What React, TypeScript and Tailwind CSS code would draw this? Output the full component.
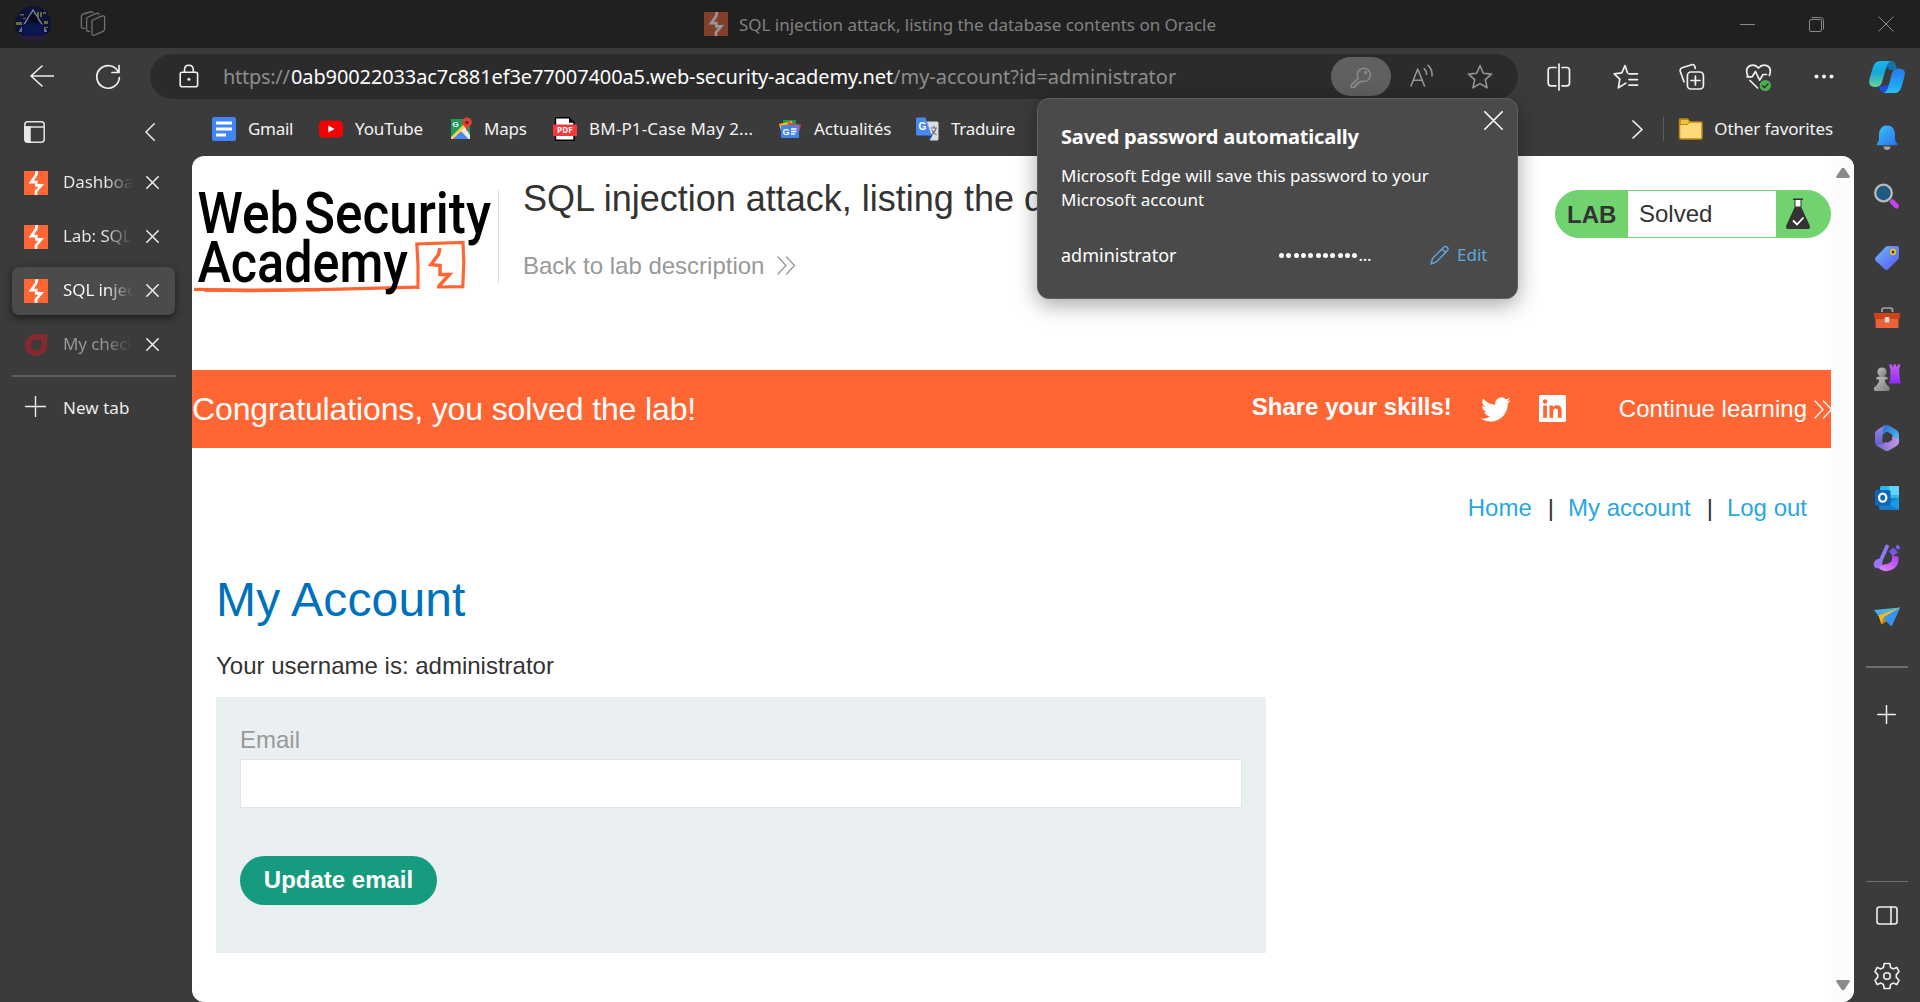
import React from "react";

const UI = "font-['Noto_Sans','Open_Sans',sans-serif]";

type IconProps = {
  w: number;
  h: number;
  className?: string;
  sw?: number;
  children: React.ReactNode;
};

/* Outline icon whose viewBox equals its pixel size. */
function Line({ w, h, className = "", sw = 1.5, children }: IconProps) {
  return (
    <svg
      width={w}
      height={h}
      viewBox={`0 0 ${w} ${h}`}
      fill="none"
      stroke="currentColor"
      strokeWidth={sw}
      strokeLinecap="round"
      strokeLinejoin="round"
      className={`shrink-0 ${className}`}
    >
      {children}
    </svg>
  );
}

function BurpIcon({ dim = false, className = "" }: { dim?: boolean; className?: string }) {
  return (
    <svg width="24" height="24" viewBox="0 0 24 24" className={`shrink-0 ${className}`}>
      <rect width="24" height="24" fill={dim ? "#82402b" : "#ff6633"} />
      <path
        d="M12.900 0L12.200 4L7.200 11.200H12.300V14.300H17.200L12 20.500V24"
        fill="none"
        stroke={dim ? "#979797" : "#fff"}
        strokeWidth="2.700"
      />
    </svg>
  );
}

function Avatar() {
  return (
    <svg width="36" height="36" viewBox="0 0 36 36" className="shrink-0">
      <defs>
        <clipPath id="av"><circle cx="18" cy="18" r="18" /></clipPath>
      </defs>
      <g clipPath="url(#av)">
        <rect width="36" height="36" fill="#0c1336" />
        <rect y="28" width="36" height="8" fill="#2b1d33" />
        <g fill="#8a8440" opacity=".75">
          <rect x="5" y="8" width="4" height="1.5" />
          <rect x="1" y="16" width="6" height="3" />
          <rect x="29" y="15" width="4" height="3" />
          <rect x="22" y="6" width="2" height="5" />
          <rect x="25" y="6" width="2" height="5" />
          <rect x="28" y="6" width="3" height="2" />
          <rect x="8" y="12" width="3" height="1" />
          <rect x="30" y="21" width="3" height="1" />
        </g>
        <path d="M18 4L5 25H31Z" fill="#10142b" stroke="#7f8ba6" strokeWidth="1.4" />
        <path d="M13 19q0-11 5-11t5 11z" fill="#070b1c" />
        <path d="M7 19q11-5 22 0v11H7z" fill="#091342" />
        <path d="M9 19h18v11H9z" fill="#0b1850" />
      </g>
    </svg>
  );
}

function CloseX({ s = 13, sw = 1.7 }: { s?: number; sw?: number }) {
  return (
    <Line w={s} h={s} sw={sw}>
      <path d={`M.8 .8L${s - 0.8} ${s - 0.8}M${s - 0.8} .8L.8 ${s - 0.8}`} />
    </Line>
  );
}

function TitleBar() {
  return (
    <div className="flex h-12 shrink-0 items-center bg-[#202020] pl-[15px] text-[#828282]">
      <Avatar />
      <Line w={26} h={26} className="ml-[29px] text-[#707070]" sw={1.3}>
        <path d="M12 9.5L21.5 5.2Q24.6 4 24.6 6.5V18Q24.6 19.6 23 20.4L14.5 24.2Q12 25 12 22.5V11Q12 9.8 12 9.5Z" />
        <path d="M9.5 20.3Q6.6 21 6.6 18.5V8.2Q6.6 6.6 8 6L16.5 2.3Q18.6 1.6 19 3.5" />
        <path d="M4.6 17.3Q1.4 18 1.4 15.5V5.2Q1.4 3.8 3 3L10.5 1Q12.5 .6 13 1.6" />
      </Line>
      <div className="ml-[598px] flex w-[900px] items-center">
        <BurpIcon dim />
        <span className={`ml-[11px] mt-[2px] whitespace-nowrap text-[17px] tracking-[-0.02px] ${UI}`}>
          SQL injection attack, listing the database contents on Oracle
        </span>
      </div>
      <div className="ml-auto flex items-center gap-[54px] pr-[26px] text-[#8a8a8a]">
        <Line w={15} h={15} sw={1}><path d="M0 7.5H15" /></Line>
        <Line w={15} h={15} sw={1}>
          <rect x=".5" y="2.5" width="12" height="12" rx="1.5" />
          <path d="M3 .5H11.5Q14.5 .5 14.5 3.5V12" />
        </Line>
        <CloseX s={16} sw={1} />
      </div>
    </div>
  );
}

function Toolbar() {
  return (
    <div className="flex h-[57px] shrink-0 items-start pt-[6px] text-[#f0f0f0]">
      <div className="flex h-[45px] w-[150px] shrink-0 items-center pl-[30px]">
        <Line w={24} h={22} className="mt-[-2px]" sw={1.6}><path d="M12 1L1 11L12 21M1 11H23.5" /></Line>
        <Line w={26} h={26} className="ml-[41px]" sw={1.7}>
          <path d="M23.4 8.2A11.3 11.3 0 1 0 24.4 13.5M24 1.5V8.5H17" />
        </Line>
      </div>
      <div className="flex h-[45px] w-[1368px] shrink-0 items-center rounded-full bg-[#2b2b2b] pl-[29px]">
        <Line w={20} h={24} className="mt-[-2px]" sw={1.6}>
          <rect x="1.2" y="8.2" width="17.4" height="14.6" rx="2" />
          <path d="M5.5 8V6Q5.5 1.2 9.9 1.2T14.3 6V8" />
          <circle cx="9.9" cy="15.3" r="1.5" fill="currentColor" stroke="none" strokeWidth="2" />
        </Line>
        <div className={`ml-[24px] flex w-[1108px] whitespace-nowrap text-[20px] text-[#8d8d8d] ${UI}`}>
          <span className="w-[68px] tracking-[-0.3px]">https://</span>
          <span className="w-[602px] tracking-[-0.12px] text-white">
            0ab90022033ac7c881ef3e77007400a5.web-security-academy.net
          </span>
          <span>/my-account?id=administrator</span>
        </div>
        <div className="flex h-[39px] w-[60px] items-center justify-center rounded-full bg-[#606060] text-[#8c8c8c]">
          <Line w={22} h={22}>
            <path d="M8.2 12.4L1.3 18.9V21.2H5.2V18.8H7.6V16.4H9.8L11.2 15A6.6 6.6 0 1 0 8.2 12.4Z" />
            <circle cx="15.6" cy="6.4" r="1" />
          </Line>
        </div>
        <Line w={24} h={24} className="ml-[19px] mt-[-2px] text-[#959595]" sw={1.6}>
          <path d="M1 22L7.7 5L14.5 22M3.2 16.2H12.2" />
          <path d="M14.2 4.6Q16.5 6.8 16.6 10.3M18 1.4Q22.5 5.2 22 12" />
        </Line>
        <Line w={26} h={26} className="ml-[33px] text-[#959595]" sw={1.6}>
          <path d="M13 1.6L16.3 9.3L24.5 10.1L18.3 15.6L20.1 23.8L13 19.6L5.9 23.8L7.7 15.6L1.5 10.1L9.7 9.3Z" />
        </Line>
      </div>
      <div className="flex h-[45px] flex-1 items-center">
        <Line w={24} h={28} className="ml-[29px]" sw={1.7}>
          <path d="M9 4.5H4Q1.2 4.5 1.2 7.3V20Q1.2 22.8 4 22.8H9M15 4.5H19.7Q22.5 4.5 22.5 7.3V20Q22.5 22.8 19.7 22.8H15M12 1V27" />
        </Line>
        <Line w={26} h={26} className="ml-[42px]" sw={1.7}>
          <path d="M14.5 9L12 1.6L8.8 8.8L1.2 9.8L6.8 15.2L5.4 23.8L12 19.6L12.8 19.2M16 9.8H24.5M16 15.6H24.5M16 21.2H24.5" />
        </Line>
        <Line w={26} h={28} className="ml-[40px]" sw={1.7}>
          <rect x="8.4" y="9" width="16" height="17" rx="3.5" />
          <path d="M16.4 13V22M12 17.5H21M5 18.8L1.3 8.5Q.6 5.8 3 4.7L13.5 1.5Q15.6 1.2 16.3 5.3" />
        </Line>
        <Line w={28} h={29} className="ml-[40px] mt-[2px]" sw={1.7}>
          <path d="M2.6 12.4Q-.2 5 5.3 2.6Q10 .8 13.5 5Q17 .8 21.7 2.6Q27.2 5 24.4 12.4M2 13.8H7.2L10.5 8.5L14.6 17.2L18 11.5H21.5M5 17.5L12.6 25" />
          <circle cx="20.3" cy="22.5" r="5.6" fill="#4caf50" stroke="none" strokeWidth="1" />
          <path d="M17.6 22.8L19.5 24.6L23 20.9" stroke="#222" strokeWidth="1.3" />
        </Line>
        <svg width="20" height="5" viewBox="0 0 20 5" className="ml-[41px]" fill="#f0f0f0">
          <circle cx="2.5" cy="2.5" r="2" /><circle cx="10" cy="2.5" r="2" /><circle cx="17.5" cy="2.5" r="2" />
        </svg>
        <svg width="38" height="38" viewBox="0 0 38 38" className="ml-[34px] shrink-0">
          <defs>
            <linearGradient id="cpA" x1="0" y1="0" x2="0" y2="1">
              <stop offset="0" stopColor="#18b6ee" /><stop offset=".45" stopColor="#17a8d8" /><stop offset="1" stopColor="#69d39c" />
            </linearGradient>
            <linearGradient id="cpB" x1="0" y1="0" x2="0" y2="1">
              <stop offset="0" stopColor="#2a78ea" /><stop offset=".7" stopColor="#21a5f5" /><stop offset="1" stopColor="#27c3ee" />
            </linearGradient>
          </defs>
          <path d="M18 3H24Q27 3 28 8L29 12H22L18 9Z" fill="#1272a8" />
          <path d="M11 28.5Q11 33 14.5 34.5H24L21 27Z" fill="#1d4fd8" />
          <path d="M12 3H23Q19.500 4 18 10L14 24Q13 29 7 29Q0 29 1.200 22L5 9Q7 3 12 3Z" fill="url(#cpA)" />
          <path d="M27 35H15.500Q19 34 20.500 28L24 15Q25.300 10.500 31 10.500Q38 10.500 36.800 17L33.500 29Q31.500 35 27 35Z" fill="url(#cpB)" />
        </svg>
      </div>
    </div>
  );
}

function Tab({ label, kind = "normal" }: { label: string; kind?: "normal" | "active" | "muted" }) {
  const box =
    kind === "active"
      ? "bg-[#4b4b4b] shadow-[0_3px_8px_rgba(0,0,0,0.55)]"
      : "";
  const color =
    kind === "active"
      ? "from-[#ffffff] from-60% to-[#4b4b4b]"
      : kind === "muted"
        ? "from-[#989898] from-60% to-[#3b3b3b]"
        : "from-[#ececec] from-60% to-[#3b3b3b]";
  return (
    <div className={`ml-[12px] flex h-12 w-[163px] items-center rounded-[7px] pl-3 ${box}`}>
      {kind === "muted" ? (
        <svg width="24" height="24" viewBox="0 0 24 24" className="shrink-0">
          <path d="M12 3.800H20.200V12A8.200 8.200 0 1 1 12 3.800Z" fill="none" stroke="#862a31" strokeWidth="5.800" />
        </svg>
      ) : (
        <BurpIcon />
      )}
      <span
        className={`-mt-[2px] ml-[15px] w-[70px] overflow-hidden whitespace-nowrap bg-gradient-to-r bg-clip-text text-[17px] tracking-[-0.1px] text-transparent ${color} ${UI}`}
      >
        {label}
      </span>
      <span className="-mt-[2px] ml-[13px] text-[#f0f0f0]"><CloseX sw={1.5} /></span>
    </div>
  );
}

function TabsColumn() {
  return (
    <div className="flex w-48 shrink-0 flex-col text-[#ececec]">
      <div className="flex h-[54px] items-center pl-6">
        <svg width="21" height="22" viewBox="0 0 21 22" fill="none" stroke="#e6e6e6" strokeWidth="1.5">
          <rect x=".8" y=".8" width="19.400" height="20.400" rx="3" />
          <path d="M1 6H20" /><path d="M1 6H6V21H3Q1 20 1 18Z" fill="#e6e6e6" />
        </svg>
        <Line w={10} h={18} className="ml-[100px]"><path d="M9.200 .8L1 9L9.200 17.200" /></Line>
      </div>
      <div className="flex flex-col gap-[6px]">
        <Tab label="Dashboard" />
        <Tab label="Lab: SQL injection" />
        <Tab label="SQL injection" kind="active" />
        <Tab label="My checklist" kind="muted" />
      </div>
      <div className="ml-3 mt-[6px] h-[2px] w-[164px] bg-[#5e5e5e]" />
      <div className="flex h-[58px] items-center pl-[25px]">
        <Line w={21} h={21} sw={1.400}><path d="M10.500 .5V20.500M.5 10.500H20.500" /></Line>
        <span className={`ml-[17px] mt-[4px] text-[17px] tracking-[0.05px] ${UI}`}>New tab</span>
      </div>
    </div>
  );
}

function Bookmark({ icon, label, w }: { icon: React.ReactNode; label: string; w: string }) {
  return (
    <div className={`flex shrink-0 items-center ${w}`}>
      <span className="flex w-9 shrink-0">{icon}</span>
      <span className={`whitespace-nowrap text-[17px] ${UI}`}>{label}</span>
    </div>
  );
}

function BookmarksBar() {
  return (
    <div className="flex h-[51px] shrink-0 items-center pl-5 pb-[3px] text-[#f3f3f3]">
      <Bookmark
        w="w-[107px] tracking-[-0.300px]"
        label="Gmail"
        icon={
          <svg width="24" height="24" viewBox="0 0 24 24">
            <rect width="24" height="24" rx="2" fill="#4285f4" />
            <path d="M4 6H20M4 12H20M4 18H14" stroke="#fff" strokeWidth="3" />
          </svg>
        }
      />
      <Bookmark
        w="w-[131px] tracking-[-0.100px]"
        label="YouTube"
        icon={
          <svg width="24" height="24" viewBox="0 0 24 24">
            <rect y="3.500" width="24" height="17" rx="4.500" fill="#f60000" />
            <path d="M9.300 8.500V15.500L15.600 12Z" fill="#fff" />
          </svg>
        }
      />
      <Bookmark
        w="w-[103px] tracking-[-0.200px] [&>span:first-child]:w-[34px]"
        label="Maps"
        icon={
          <svg width="24" height="24" viewBox="0 0 24 24">
            <path d="M1 2H20V22H1Z" fill="#1c9c58" />
            <path d="M1 22L11 12L20 22Z" fill="#4a87ee" />
            <path d="M1 20L17 4L20 8L3 22H1Z" fill="#ffd04b" />
            <path d="M3 22L11 14.500L18 22Z" fill="#4a87ee" />
            <path d="M11 14L15 10L20 18V22H18.500Z" fill="#e8e8e8" />
            <path d="M16.800 14Q16 10.500 13.500 8.500A4.800 4.800 0 1 1 20.500 8.500Q17.500 11 16.800 14Z" fill="#db4437" />
            <circle cx="17" cy="5.500" r="1.800" fill="#7c2218" />
            <text x="2.500" y="9.500" fontSize="8" fontWeight="700" fill="#fff" fontFamily="Liberation Sans, sans-serif">G</text>
          </svg>
        }
      />
      <Bookmark
        w="w-[225px] tracking-[0.150px]"
        label="BM-P1-Case May 2..."
        icon={
          <svg width="24" height="24" viewBox="0 0 24 24">
            <path d="M2.500 .7H16L21 5.700V23.300H2.500Z" fill="#fff" stroke="#000" strokeWidth="1.400" />
            <path d="M16 .7V5.700H21Z" fill="#000" />
            <rect y="7.500" width="24" height="11.500" rx="1" fill="#f4383c" />
            <text x="12" y="16.100" textAnchor="middle" fontSize="8" fontWeight="700" fill="#fff" fontFamily="Open Sans, sans-serif">PDF</text>
          </svg>
        }
      />
      <Bookmark
        w="w-[138px] tracking-[-0.050px] [&>span:first-child]:w-[36px]"
        label="Actualités"
        icon={
          <svg width="24" height="24" viewBox="0 0 24 24">
            <path d="M5 3H18V12H5Z" fill="#0f9d58" />
            <path d="M1 7L14 4L16 12L3 14Z" fill="#fbbc04" />
            <path d="M10 5L23 8L21 15L9 12Z" fill="#ea4335" />
            <rect x="3" y="8" width="18" height="13" rx="1" fill="#4285f4" />
            <text x="4.500" y="17.800" fontSize="9" fontWeight="700" fill="#fff" fontFamily="Liberation Sans, sans-serif">G</text>
            <path d="M13 12H18.500M13 14.500H18.500M13 17H17" stroke="#fff" strokeWidth="1.300" />
          </svg>
        }
      />
      <Bookmark
        w="w-[150px] tracking-[-0.300px] [&>span:first-child]:w-[35px]"
        label="Traduire"
        icon={
          <svg width="24" height="24" viewBox="0 0 24 24">
            <path d="M10 4.500H21Q22.500 4.500 22.500 6V22Q22.500 23.500 21 23.500H14Z" fill="#d9dde0" />
            <path d="M14.500 11H21M17.800 9V11M20 11Q19 15.500 15 18M16 13Q17.500 16.500 20.500 18" stroke="#6b7378" strokeWidth="1.200" fill="none" />
            <path d="M12 18H16.500L14 23Z" fill="#1d3fae" />
            <path d="M1.500 .5H9.500L15.500 18.500H1.500Q0 18.500 0 17V2Q0 .5 1.500 .5Z" fill="#4a87ee" />
            <text x="2.500" y="13" fontSize="10" fontWeight="700" fill="#fff" fontFamily="Liberation Sans, sans-serif">G</text>
          </svg>
        }
      />
      <div className="ml-auto flex items-center pr-[21px]">
        <Line w={11} h={19} sw={1.700}><path d="M1 1L10 9.500L1 18" /></Line>
        <div className="ml-[20px] h-6 w-px bg-[#5c5c5c]" />
        <svg width="25" height="24" viewBox="0 0 25 24" className="ml-[14px]">
          <path d="M1.500 3Q1.500 2 2.500 2H9.500L11.500 5H22.500Q24 5 24 6.500V20.500Q24 22 22.500 22H3Q1.500 22 1.500 20.500Z" fill="#ffd97a" stroke="#bb8b10" strokeWidth="1.500" />
          <path d="M2 7.500H9.500L11.500 4.500L10 2.500H2.500Z" fill="#f5c431" stroke="#bb8b10" strokeWidth="1" />
        </svg>
        <span className={`ml-[11px] whitespace-nowrap text-[17px] tracking-[-0.120px] ${UI}`}>Other favorites</span>
      </div>
    </div>
  );
}

function AcademyLogo() {
  return (
    <svg width="306" height="130" viewBox="192 170 306 130" className="mt-[14px] shrink-0">
      <g fill="none" stroke="#ff6633" strokeWidth="3">
        <path d="M194 289.300L250 290.200L330 289.300L417 287.200" strokeWidth="3.300" />
        <path d="M204 291L250 291.600L320 290.500" strokeWidth="1.500" />
        <path d="M418 289V265L416.800 244L463 242.500L463.800 262L462.800 286.600L437 287" strokeWidth="3.200" />
        <path d="M440 248L438.500 254.500L431 264.500L440 265.500V274.500H449.500L438.500 286.500" strokeWidth="3.500" />
      </g>
      <g fontFamily="Roboto, sans-serif" fontWeight="500" fontSize="57.500" fill="#000">
        <text x="197.500" y="233" textLength="101" lengthAdjust="spacingAndGlyphs">Web</text>
        <text x="304" y="233" textLength="187" lengthAdjust="spacingAndGlyphs">Security</text>
        <text x="197.500" y="281.500" textLength="210.500" lengthAdjust="spacingAndGlyphs">Academy</text>
      </g>
    </svg>
  );
}

function DoubleChevron({ className = "" }: { className?: string }) {
  return (
    <Line w={19} h={19} sw={1.300} className={className}>
      <path d="M1 1L9 9.500L1 18M9.500 1L17.500 9.500L9.500 18" />
    </Line>
  );
}

function LabHeader() {
  return (
    <div className="flex h-[214px] items-start">
      <AcademyLogo />
      <div className="mt-[34px] h-[93px] w-px shrink-0 bg-[#dcdcdc]" />
      <div className="ml-6 mt-[22px] w-[1032px] shrink-0 whitespace-nowrap">
        <h2 className="text-[36px] leading-[42px] text-[#333332]">
          SQL injection attack, listing the database contents on Oracle
        </h2>
        <div className="mt-[32px] flex items-center text-[24px] leading-[28px] text-[#999999]">
          Back to lab description
          <DoubleChevron className="mt-[-2px] ml-[13px]" />
        </div>
      </div>
      <div className="mt-[34px] flex h-12 w-[276px] shrink-0 overflow-hidden rounded-full border border-[#71d36f] bg-[#71d36f] text-[24px] text-[#333332]">
        <div className="flex w-[72px] items-center pl-[11px] pt-[2px] font-bold">LAB</div>
        <div className="flex w-[148px] items-center bg-white pl-[11px]">Solved</div>
        <svg width="26" height="32" viewBox="0 0 26 32" className="ml-[9px] mt-[7px]">
          <rect x="10" y="2" width="6" height="9" fill="#fff" />
          <path d="M8 1.200H18" stroke="#333332" strokeWidth="1.600" />
          <path d="M10 2V9M16 2V9" stroke="#333332" strokeWidth="1" />
          <path d="M10 8.500H16L24.700 27.500Q25.500 31 23 31H3Q.5 31 1.300 27.500Z" fill="#333332" />
          <path d="M8 22.500L12 26.500L18.500 19.500" stroke="#fff" strokeWidth="1.800" fill="none" />
        </svg>
      </div>
    </div>
  );
}

function Banner() {
  return (
    <div className="flex h-[78px] items-center overflow-hidden bg-[#ff6633] text-white">
      <span className="whitespace-nowrap text-[32px] tracking-[-0.130px]">Congratulations, you solved the lab!</span>
      <div className="-mr-[2px] ml-auto flex items-center whitespace-nowrap text-[24px]">
        <span className="mb-1 font-bold">Share your skills!</span>
        <svg width="30" height="30" viewBox="0 0 24 24" fill="#fff" className="ml-[29px]">
          <path d="M23.600 4.900a9.600 9.600 0 0 1-2.800.8 4.800 4.800 0 0 0 2.100-2.700 9.600 9.600 0 0 1-3.100 1.200 4.900 4.900 0 0 0-8.300 4.400A13.800 13.800 0 0 1 1.700 3.600a4.900 4.900 0 0 0 1.500 6.500 4.800 4.800 0 0 1-2.200-.6v.1a4.900 4.900 0 0 0 3.900 4.700 4.900 4.900 0 0 1-2.200.1 4.900 4.900 0 0 0 4.500 3.400A9.800 9.800 0 0 1 0 19.800a13.800 13.800 0 0 0 7.500 2.200c9 0 13.900-7.500 13.900-13.900v-.6a9.900 9.900 0 0 0 2.200-2.600z" />
        </svg>
        <svg width="27" height="27" viewBox="0 0 27 27" className="-mt-[2px] ml-[28px]">
          <rect width="27" height="27" rx="1.500" fill="#fff" />
          <g fill="#ff6633">
            <circle cx="6" cy="6.500" r="2.200" /><rect x="4.200" y="10.500" width="3.700" height="12.300" />
            <path d="M10.500 10.500H14V12.300Q15.300 10.200 18 10.200Q22.600 10.200 22.600 15.500V22.800H18.900V16.300Q18.900 13.500 16.700 13.500Q14.200 13.500 14.200 16.500V22.800H10.500Z" />
          </g>
        </svg>
        <span className="ml-[53px]">Continue learning</span>
        <DoubleChevron className="ml-[7px]" />
      </div>
    </div>
  );
}

function LabPage() {
  return (
    <div className="w-[1639px] shrink-0 font-['Liberation_Sans',Arial,sans-serif]">
      <LabHeader />
      <Banner />
      <nav className="flex h-[120px] items-center justify-end gap-[14px] pr-6 text-[24px] text-[#29a7df]">
        <span>Home</span>
        <span className="ml-[2px] text-[#333332]">|</span>
        <span>My account</span>
        <span className="ml-[2px] text-[#333332]">|</span>
        <span>Log out</span>
      </nav>
      <div className="pl-6">
        <h1 className="mt-[4px] text-[48px] leading-[56px] tracking-[0.150px] text-[#0071bd]">My Account</h1>
        <p className="mt-[24px] text-[24px] leading-[28px] text-[#333332]">Your username is: administrator</p>
        <div className="mt-[17px] h-[256px] w-[1050px] bg-[#eaeff2] px-6 pt-[29px]">
          <div className="text-[24px] leading-[28px] text-[#999999]">Email</div>
          <div className="mt-[5px] h-[49px] w-[1002px] border border-[#e4e4e4] bg-white" />
          <div className="mt-12 flex h-[49px] w-[197px] items-center justify-center rounded-full bg-[#169b7f] pb-[2px] text-[24px] font-bold text-white">
            Update email
          </div>
        </div>
      </div>
    </div>
  );
}

function SideIcon({ children, className = "" }: { children: React.ReactNode; className?: string }) {
  return (
    <svg width="28" height="28" viewBox="0 0 28 28" className={`shrink-0 ${className}`}>
      {children}
    </svg>
  );
}

function AppRail() {
  return (
    <div className="flex w-[66px] shrink-0 flex-col items-center text-[#efefef]">
      <svg width="0" height="0" className="absolute">
        <defs>
          <linearGradient id="gBell" x1="0" y1="0" x2="1" y2="1"><stop offset="0" stopColor="#38c8f5" /><stop offset="1" stopColor="#2b6df0" /></linearGradient>
          <linearGradient id="gTag" x1="0" y1="0" x2="1" y2="1"><stop offset="0" stopColor="#70b8fb" /><stop offset="1" stopColor="#5a55f5" /></linearGradient>
          <linearGradient id="gGray" x1="0" y1="0" x2="1" y2="1"><stop offset="0" stopColor="#c4c4c4" /><stop offset="1" stopColor="#7c7c7c" /></linearGradient>
          <linearGradient id="gPur" x1="0" y1="0" x2="0" y2="1"><stop offset="0" stopColor="#c65cf5" /><stop offset="1" stopColor="#8f2bf0" /></linearGradient>
          <linearGradient id="gM1" x1="0" y1="0" x2="0" y2="1"><stop offset="0" stopColor="#9d86dc" /><stop offset="1" stopColor="#5b5fd0" /></linearGradient>
          <linearGradient id="gM2" x1="0" y1="0" x2="1" y2="1"><stop offset="0" stopColor="#2f63c9" /><stop offset="1" stopColor="#49c8f5" /></linearGradient>
          <linearGradient id="gM3" x1="0" y1="0" x2="1" y2="0"><stop offset="0" stopColor="#7466cf" /><stop offset="1" stopColor="#c495e6" /></linearGradient>
          <linearGradient id="gDes" x1="0" y1="1" x2="1" y2="0"><stop offset="0" stopColor="#e58df5" /><stop offset="1" stopColor="#a43ff0" /></linearGradient>
          <linearGradient id="gPlane" x1="0" y1="0" x2="0" y2="1"><stop offset="0" stopColor="#50b8e8" /><stop offset="1" stopColor="#2d8df0" /></linearGradient>
        </defs>
      </svg>
      <div className="flex flex-col gap-8 pt-[19px]">
        <SideIcon>
          <path d="M4 20L6 16V10.500Q6.500 1.500 14 1.500T22 10.500V16L24.500 20Q25 21.300 23.500 21.300H4.500Q3 21.300 4 20Z" fill="url(#gBell)" />
          <path d="M10.500 22.500H17.500Q17 26 14 26T10.500 22.500Z" fill="#a8a8a8" />
        </SideIcon>
        <SideIcon className="-mt-px mb-px">
          <path d="M17.500 17.500L22 22" stroke="#9d9d9d" strokeWidth="3" />
          <path d="M19.500 19L23.500 23" stroke="#c940f2" strokeWidth="5" strokeLinecap="round" />
          <circle cx="10.500" cy="10" r="8.300" fill="#1d5a82" stroke="#b9b9b9" strokeWidth="2.300" />
        </SideIcon>
        <SideIcon>
          <path d="M14.500 2H24Q26 2 26 4V13Q26 14.500 25 15.500L15.500 25Q13.500 27 11.500 25L3 17Q1 15 3 13L12.500 3Q13.500 2 14.500 2Z" fill="url(#gTag)" />
          <circle cx="20" cy="8" r="2.300" fill="#3b3b3b" stroke="#f2c80f" strokeWidth="1.700" />
        </SideIcon>
        <SideIcon>
          <path d="M9 8V6Q9 4 11 4H17.500Q19.500 4 19.500 6V8" fill="none" stroke="#a5a5a5" strokeWidth="1.700" />
          <path d="M2.500 13H25.500V22.500Q25.500 24 24 24H4Q2.500 24 2.500 22.500Z" fill="#e8623a" />
          <path d="M1.500 9H26.500Q27.500 9 27.200 10L26.500 15H1.800L.8 10Q.8 9 1.500 9Z" fill="#cf4316" />
          <rect x="11.800" y="13" width="4.500" height="5.500" rx="1" fill="#d7d7d7" />
        </SideIcon>
        <SideIcon>
          <path d="M16 .5H19V2.500H20.500V.5H23V2.500H24.500V.5H27.500L26 6L27 17Q28 17.500 27.500 19.500H16Q15.500 18 17 17L17.500 6Z" fill="url(#gPur)" />
          <circle cx="9" cy="8" r="4.600" fill="url(#gGray)" />
          <path d="M3.500 13.200Q9 11.500 14.500 13.200V15.500H11.800Q12 20 16.500 23V25.500Q16.500 27 15 27H3Q1 27 1 25.500V23.500Q6 20 6.200 15.500H3.500Z" fill="url(#gGray)" />
        </SideIcon>
        <SideIcon>
          <path d="M12 1.300L5 5.300Q2 7.200 2 10.500V18.500L4.500 22L11 20.500L9.500 18V11.500Q9.500 9.500 11.500 8.500L16 6Z" fill="url(#gM1)" />
          <path d="M12 1.300Q14 .3 16 1.500L23.500 6Q26 7.500 26 10.500V17L19.500 14.500V12Q19.500 10.500 18 9.700L14.500 8Q11 8 9.500 11.500Q9 5 12 1.300Z" fill="url(#gM2)" />
          <path d="M26 15V18Q26 20.500 23.500 22L16 26.500Q14 27.500 12 26.500L4.500 22.300Q3 21.300 2.500 19.500Q5 21.500 9 20L17.500 15.800Q19.500 14.800 19.500 12.500Z" fill="url(#gM3)" />
          <path d="M14.500 8.700L19 11.200V16L14.500 18.700L10 16V11.200Z" fill="#3b3b3b" />
        </SideIcon>
        <SideIcon>
          <rect x="7" y="2" width="19" height="18" rx="1.500" fill="#2bb8ef" />
          <rect x="16" y="2" width="10" height="9" fill="#62d3fa" />
          <path d="M6 14H26V24Q26 26 24 26H8Q6 26 6 24Z" fill="#1b7cc8" />
          <path d="M26 13.500V26L15 20Z" fill="#1a9be2" />
          <rect x="2" y="6" width="15.500" height="15.500" rx="1.500" fill="#0c66bb" />
          <ellipse cx="9.700" cy="13.700" rx="3.600" ry="4" fill="none" stroke="#fff" strokeWidth="2.300" />
        </SideIcon>
        <SideIcon>
          <path d="M4 19.500Q12 22.500 18 18Q19.500 15 19 11.500L25.500 12.500Q26.500 21 20.500 25Q12 29.500 6 24.500Q3.500 22.500 4 19.500Z" fill="url(#gDes)" />
          <path d="M14 2.500L7.500 17" stroke="#8a7cf8" strokeWidth="3.800" strokeLinecap="round" />
          <ellipse cx="5" cy="19.500" rx="4" ry="5" transform="rotate(35 5 19.500)" fill="#9a74f2" />
          <path d="M20.500 3.500L25 8.500L19.500 12L16 7.500Z" fill="#7a55ec" /><path d="M24.500 .5L27.500 3.500L25 6L22.500 3Z" fill="#7b66f5" />
        </SideIcon>
        <SideIcon>
          <path d="M1 6L27 3.500L18.500 22.500L13 17L5.500 12Z" fill="url(#gPlane)" />
          <path d="M27 3.500L5.500 11.500L8.500 20.500L11 13Z" fill="#f6b81c" />
          <path d="M8.500 20.500L10 14L14 17Z" fill="#c8860c" />
          <path d="M27 3.500L10.500 14L18.500 22Z" fill="#3793f2" />
        </SideIcon>
      </div>
      <div className="mt-[34px] h-[2px] w-[42px] bg-[#6d6d6d]" />
      <Line w={19} h={19} className="mr-px mt-[37px]"><path d="M9.500 .7V18.300M.7 9.500H18.300" /></Line>
      <div className="mt-auto h-px w-[42px] bg-[#707070]" />
      <Line w={22} h={19} className="mt-[24px]" sw={1.600}>
        <rect x="1" y="1" width="20" height="17" rx="2.500" /><path d="M15 1V18" />
      </Line>
      <Line w={26} h={28} className="mb-[12px] mt-[37px]" sw={1.600}>
        <path d="M10.200 1.500H15.800L16.600 5.500L19 6.900L22.800 5.400L25 9.700L22.300 12.600V15.400L25 18.300L22.800 22.600L19 21.100L16.600 22.500L15.800 26.500H10.200L9.400 22.500L7 21.100L3.200 22.600L1 18.300L3.700 15.400V12.600L1 9.700L3.200 5.400L7 6.900L9.400 5.500Z" />
        <circle cx="13" cy="14" r="3.300" />
      </Line>
    </div>
  );
}

function PasswordPopup() {
  return (
    <div className={`absolute left-[1037px] top-[98px] h-[201px] w-[481px] rounded-[12px] border border-[#606060] bg-[#4a4a4a] pl-[23px] text-white shadow-[0_6px_22px_rgba(0,0,0,0.35)] ${UI}`}>
      <div className="absolute right-[14px] top-[12px]"><CloseX s={19} sw={1.600} /></div>
      <div className="mt-[24px] text-[20px] font-bold leading-[28px] tracking-[-0.180px]">Saved password automatically</div>
      <p className="mt-[13px] w-[400px] text-[17px] leading-[24px]">
        Microsoft Edge will save this password to your
        <br />
        Microsoft account
      </p>
      <div className="mt-[30px] flex items-center text-[17px] leading-[26px]">
        <span className="w-[218px] text-[18px]">administrator</span>
        <span className="flex w-[151px] items-center">
          <span className="flex gap-[2.350px]">
            {Array.from({ length: 11 }, (_, i) => (
              <span key={i} className="h-[5px] w-[5px] rounded-full bg-white" />
            ))}
          </span>
          <span className="ml-px tracking-[-0.300px]">...</span>
        </span>
        <Line w={19} h={20} className="text-[#5ea7df]" sw={1.400}>
          <path d="M1 19L2.500 13.500L14 2Q15.500 .7 17.300 2.300Q18.700 4 17.500 5.500L6 17.200ZM12 4L15.600 7.600" />
        </Line>
        <span className="ml-[8px] text-[#5ea7df]">Edit</span>
      </div>
    </div>
  );
}

export default function App() {
  return (
    <div className="relative flex h-[1002px] w-[1920px] flex-col overflow-hidden bg-[#3b3b3b]">
      <TitleBar />
      <Toolbar />
      <div className="flex min-h-0 flex-1">
        <TabsColumn />
        <div className="flex w-[1662px] shrink-0 flex-col">
          <BookmarksBar />
          <div className="flex min-h-0 flex-1 overflow-hidden rounded-[12px] bg-white">
            <LabPage />
            <div className="flex w-[23px] flex-col items-center justify-between bg-[#fcfcfc] pb-[11px] pt-[11px]">
              <svg width="14" height="12" viewBox="0 0 14 12" fill="#8a8a8a"><path d="M5.500 1.500Q7 0 8.500 1.500L13.500 9Q14.500 11 12.500 11H1.500Q-.5 11 .5 9Z" /></svg>
              <svg width="14" height="12" viewBox="0 0 14 12" fill="#8a8a8a"><path d="M5.500 10.500Q7 12 8.500 10.500L13.500 3Q14.500 1 12.500 1H1.500Q-.5 1 .5 3Z" /></svg>
            </div>
          </div>
        </div>
        <AppRail />
      </div>
      <PasswordPopup />
    </div>
  );
}
